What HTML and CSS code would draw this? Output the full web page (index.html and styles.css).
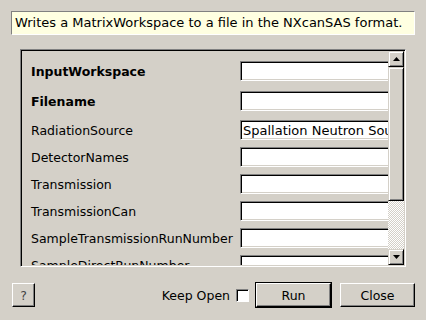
FILE: index.html
```html
<!DOCTYPE html>
<html lang="en">
<head>
    <meta charset="UTF-8">
    <title>SaveNXcanSAS</title>
    <link rel="stylesheet" href="styles.css">
</head>
<body>

    <div class="dialog">

        <!-- algorithm summary -->
        <div class="description">Writes a MatrixWorkspace to a file in the NXcanSAS format.</div>

        <!-- property list -->
        <div class="frame">
            <div class="form">
                <div class="row r1"><span class="name bold">InputWorkspace</span><input class="field" type="text"></div>
                <div class="row r2"><span class="name bold">Filename</span><input class="field" type="text"></div>
                <div class="row r3"><span class="name">RadiationSource</span><input class="field" type="text" value="Spallation Neutron Source"></div>
                <div class="row"><span class="name">DetectorNames</span><input class="field" type="text"></div>
                <div class="row"><span class="name">Transmission</span><input class="field" type="text"></div>
                <div class="row"><span class="name">TransmissionCan</span><input class="field" type="text"></div>
                <div class="row"><span class="name">SampleTransmissionRunNumber</span><input class="field" type="text"></div>
                <div class="row"><span class="name">SampleDirectRunNumber</span><input class="field" type="text"></div>
            </div>
            <div class="scrollbar">
                <div class="arrow">
                    <svg width="7" height="4" viewBox="0 0 7 4"><polygon points="3.5,0 7,4 0,4" fill="#000"/></svg>
                </div>
                <div class="thumb"></div>
                <div class="track"></div>
                <div class="arrow">
                    <svg width="7" height="4" viewBox="0 0 7 4"><polygon points="0,0 7,0 3.5,4" fill="#000"/></svg>
                </div>
            </div>
        </div>

        <!-- buttons -->
        <div class="actions">
            <button class="btn help">?</button>
            <div class="spacer"></div>
            <label class="keep"><span>Keep Open</span><input class="check" type="checkbox"></label>
            <button class="btn run">Run</button>
            <button class="btn close">Close</button>
        </div>

    </div>

</body>
</html>
```

FILE: styles.css
```css
body {
    margin: 0;
    width: 426px;
    height: 320px;
    overflow: hidden;
    background-color: #d4d0c8;
    font-family: 'DejaVu Sans', sans-serif;
    font-size: 12.5px;
    color: #000;
}

.dialog {
    padding: 11px 11px 0 11px;
}

.description {
    height: 22px;
    line-height: 22px;
    padding-left: 3px;
    font-size: 13px;
    background: #ffffe1;
    border: 1px solid;
    border-color: #808080 #fff #fff #808080;
    white-space: nowrap;
}

/* property list */
.frame {
    display: flex;
    margin: 14px 9px 0 9px;
    height: 214px;
    padding: 1px;
    border: 1px solid;
    border-color: #808080 #fff #fff #808080;
    box-shadow: inset 1px 1px #000;
}

.form {
    flex: 1;
    overflow: hidden;
    padding-left: 9px;
}

.row {
    display: flex;
    align-items: center;
    height: 20px;
    margin-top: 7px;
}

.row.r1 { margin-top: 10px; }
.row.r2 { margin-top: 10px; }
.row.r3 { margin-top: 9px; }

.name {
    flex: 0 0 209px;
    white-space: nowrap;
}

.bold {
    font-weight: bold;
}

.field {
    flex: 0 0 170px;
    box-sizing: border-box;
    height: 20px;
    margin: 0;
    padding: 0 2px;
    font-family: inherit;
    font-size: 13px;
    background: #fff;
    border: 1px solid;
    border-color: #808080 #fff #fff #808080;
    box-shadow: inset 1px 1px #000, inset -1px -1px #d4d0c8;
    outline: none;
}

/* scrollbar */
.scrollbar {
    flex: 0 0 16px;
    display: flex;
    flex-direction: column;
}

.arrow,
.thumb {
    box-sizing: border-box;
    background: #d4d0c8;
    border: 1px solid;
    border-color: #d4d0c8 #000 #000 #d4d0c8;
    box-shadow: inset 1px 1px #fff, inset -1px -1px #808080;
}

.arrow {
    height: 16px;
    display: flex;
    align-items: center;
    justify-content: center;
}

.arrow svg {
    display: block;
}

.thumb {
    height: 134px;
}

.track {
    flex: 1;
    background-image: conic-gradient(#fff 25%, #d4d0c8 0 50%, #fff 0 75%, #d4d0c8 0);
    background-size: 2px 2px;
}

/* bottom buttons */
.actions {
    display: flex;
    align-items: center;
    margin-top: 16px;
    padding-left: 1px;
}

.spacer {
    flex: 1;
}

.btn {
    box-sizing: border-box;
    height: 24px;
    margin: 0;
    padding: 0;
    font-family: inherit;
    font-size: 12.5px;
    color: #000;
    background: #d4d0c8;
    border: 1px solid;
    border-color: #fff #000 #000 #fff;
    box-shadow: inset -1px -1px #808080;
}

.help {
    width: 23px;
    color: #444;
}

.run {
    width: 75px;
    margin-right: 9px;
    box-shadow: 0 0 0 1px #000, inset -1px -1px #808080;
}

.close {
    width: 75px;
}

.keep {
    display: flex;
    align-items: center;
    gap: 6px;
    margin-right: 7px;
}

.check {
    appearance: none;
    box-sizing: border-box;
    width: 13px;
    height: 13px;
    margin: 0;
    background: #fff;
    border: 1px solid;
    border-color: #808080 #fff #fff #808080;
    box-shadow: inset 1px 1px #000;
}
```
